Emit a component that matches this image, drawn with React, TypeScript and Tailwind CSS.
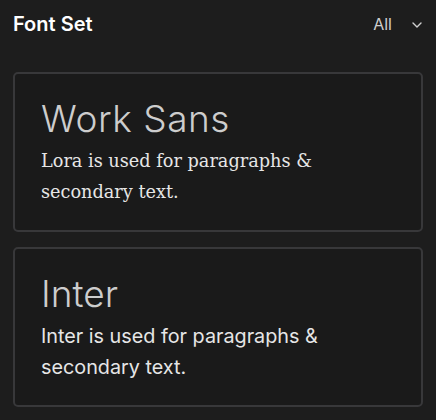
type FontCard = { title: string; titleFont: string; body: string; bodyFont: string };

const cards: FontCard[] = [
  {
    title: "Work Sans",
    titleFont: "font-['Inter',sans-serif] tracking-[0.015em]",
    body: "Lora is used for paragraphs & secondary text.",
    bodyFont: "font-['DejaVu_Serif',serif] text-[17.7px] pt-[1px]",
  },
  {
    title: "Inter",
    titleFont: "font-['Inter',sans-serif]",
    body: "Inter is used for paragraphs & secondary text.",
    bodyFont: "font-['Inter',sans-serif] text-[19.8px] pt-[1px]",
  },
];

function Chevron() {
  return (
    <svg width="10" height="6" viewBox="0 0 10 6" fill="none" className="mt-[1px]">
      <path d="M1 1l4 4 4-4" stroke="currentColor" strokeWidth="1.4" strokeLinecap="round" strokeLinejoin="round" />
    </svg>
  );
}

export default function App() {
  return (
    <div className="min-h-[420px] w-[436px] bg-[#1d1d1d] px-[13px] font-['Inter',sans-serif]">
      <div className="flex h-12 items-center justify-between">
        <h1 className="text-[20px] font-semibold text-white">Font Set</h1>
        <button type="button" className="flex items-center gap-[20px] pr-[1px] text-[16px] text-[#cfcfcf]">
          All
          <Chevron />
        </button>
      </div>

      <div className="mt-6 flex flex-col gap-[15px]">
        {cards.map((c) => (
          <div
            key={c.title}
            className="h-[160px] rounded-[5px] border-2 border-[#38383a] bg-[#1a1a1a] px-[26px] pt-[23px]"
          >
            <h2 className={`text-[37px] leading-[44px] font-light text-[#cdcdcd] ${c.titleFont}`}>{c.title}</h2>
            <p className={`mt-[4px] max-w-[320px] leading-[31px] text-[#e6e6e6] ${c.bodyFont}`}>{c.body}</p>
          </div>
        ))}
      </div>
    </div>
  );
}
